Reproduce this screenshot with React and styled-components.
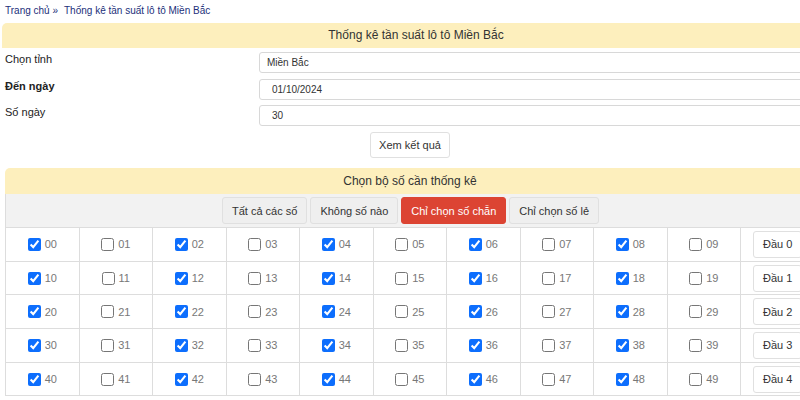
import React, { useState } from "react";
import styled, { createGlobalStyle } from "styled-components";

const GlobalStyle = createGlobalStyle`
  body {
    margin: 0;
    overflow: hidden;
    font-family: "Liberation Sans", Arial, sans-serif;
    color: #333;
    background: #fff;
  }
`;

const Page = styled.div`
  width: 830px;
`;

const Breadcrumb = styled.div`
  padding: 4px 5px 0;
  font-size: 10px;
  line-height: 14px;
  color: #22307a;
  height: 19px;

  span {
    margin-right: 6px;
  }
`;

const Header = styled.div`
  background: #fdefbd;
  border-radius: 5px 5px 0 0;
  height: ${(p) => p.$h || 25}px;
  line-height: ${(p) => p.$h || 25}px;
  text-align: center;
  font-size: 12px;
  color: #333;
`;

const TopSection = styled.div`
  margin-left: 2px;
  width: 828px;
`;

const Form = styled.div`
  padding: 4px 0 0 3px;
  display: flex;
  flex-direction: column;
  gap: 5.5px;
`;

const FormRow = styled.div`
  display: grid;
  grid-template-columns: 254px 1fr;
  align-items: start;
`;

const Label = styled.div`
  font-size: 11px;
  line-height: 14px;
  font-weight: ${(p) => (p.$bold ? "bold" : "normal")};
  color: #222;
`;

const Field = styled.div`
  height: 21px;
  border: 1px solid #d8d8d8;
  border-radius: 3px;
  padding-left: ${(p) => p.$pad || 7}px;
  font-size: 10px;
  line-height: 19px;
  color: #333;
  box-sizing: border-box;
`;

const Actions = styled.div`
  display: flex;
  justify-content: center;
  padding: 6px 0 10px;
  width: 816px;
`;

const Button = styled.button`
  font-family: inherit;
  font-size: 11px;
  color: ${(p) => (p.$active ? "#fff" : "#333")};
  background: ${(p) => (p.$active ? "#dc4433" : p.$plain ? "#fff" : "#efefef")};
  border: 1px solid ${(p) => (p.$active ? "#dc4433" : "#e0e0e0")};
  border-radius: 3px;
  height: ${(p) => p.$h || 27}px;
  padding: 0 ${(p) => p.$px || 9}px;
  cursor: pointer;
`;

const LowerSection = styled.div`
  margin-left: 5px;
  width: 810px;
`;

const Toolbar = styled.div`
  background: #f2f2f2;
  border-left: 1px solid #ddd;
  border-bottom: 1px solid #ddd;
  height: 34px;
  box-sizing: border-box;
  display: flex;
  align-items: center;
  justify-content: center;
  gap: 3px;
`;

const Grid = styled.div`
  display: grid;
  grid-template-columns: repeat(10, 73.5px) 1fr;
  border-left: 1px solid #ddd;
`;

const Cell = styled.label`
  height: 33.7px;
  box-sizing: border-box;
  border-right: 1px solid #ddd;
  border-bottom: 1px solid #ddd;
  display: flex;
  align-items: center;
  justify-content: ${(p) => (p.$start ? "flex-start" : "center")};
  padding-left: ${(p) => (p.$start ? 12 : 0)}px;
  font-size: 11px;
  color: #777;
  gap: 4px;

  input {
    margin: 0;
    width: 13px;
    height: 13px;
    accent-color: #0d6efd;
  }
`;

export default function App() {
  const [checked, setChecked] = useState(() => {
    const s = {};
    for (let i = 0; i < 100; i++) s[i] = i % 2 === 0;
    return s;
  });

  const rows = [0, 1, 2, 3, 4];

  return (
    <Page>
      <GlobalStyle />
      <Breadcrumb>
        <span>Trang chủ »</span>
        <span>Thống kê tần suất lô tô Miền Bắc</span>
      </Breadcrumb>
      <TopSection>
        <Header>Thống kê tần suất lô tô Miền Bắc</Header>
        <Form>
          <FormRow>
            <Label>Chọn tỉnh</Label>
            <Field>Miền Bắc</Field>
          </FormRow>
          <FormRow>
            <Label $bold>Đến ngày</Label>
            <Field $pad={12}>01/10/2024</Field>
          </FormRow>
          <FormRow>
            <Label>Số ngày</Label>
            <Field $pad={12}>30</Field>
          </FormRow>
        </Form>
        <Actions>
          <Button $plain $h={26} $px={8}>Xem kết quả</Button>
        </Actions>
      </TopSection>
      <LowerSection>
        <Header $h={26}>Chọn bộ số cần thống kê</Header>
        <Toolbar>
          <Button>Tất cả các số</Button>
          <Button>Không số nào</Button>
          <Button $active>Chỉ chọn số chẵn</Button>
          <Button>Chỉ chọn số lẻ</Button>
        </Toolbar>
        <Grid>
          {rows.map((r) => (
            <React.Fragment key={r}>
              {Array.from({ length: 10 }, (_, c) => {
                const n = r * 10 + c;
                return (
                  <Cell key={n}>
                    <input
                      type="checkbox"
                      checked={checked[n]}
                      onChange={() => setChecked({ ...checked, [n]: !checked[n] })}
                    />
                    {String(n).padStart(2, "0")}
                  </Cell>
                );
              })}
              <Cell as="div" $start>
                <Button $plain $h={27} $px={9}>Đầu {r}</Button>
              </Cell>
            </React.Fragment>
          ))}
        </Grid>
      </LowerSection>
    </Page>
  );
}
